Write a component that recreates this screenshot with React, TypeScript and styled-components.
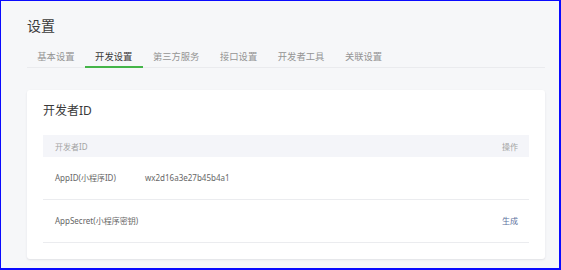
import React from "react";
import styled, { createGlobalStyle } from "styled-components";

const Global = createGlobalStyle`
  html, body { margin: 0; padding: 0; background: #f6f7f9; }
  * { box-sizing: border-box; }
  body { font-family: "Noto Sans", "Noto Sans CJK SC", sans-serif; }
`;

const Frame = styled.div`
  width: 561px;
  height: 270px;
  border-style: solid;
  border-color: #0a0aff;
  border-width: 1px 2px 2px 1px;
  background: #f6f7f9;
  padding: 14px 14px 0 26px;
  overflow: hidden;
`;

const Title = styled.h1`
  margin: 0;
  font-size: 14px;
  line-height: 20px;
  font-weight: 400;
  color: #3a3a3a;
  font-family: "Noto Sans CJK SC", sans-serif;
`;

const TabBar = styled.div`
  display: flex;
  margin-top: 11px;
  border-bottom: 1px solid #eaebee;
`;

const Tab = styled.div<{ $active?: boolean }>`
  padding: 0 10.3px;
  margin-bottom: -1px;
  font-size: 9.3px;
  line-height: 20px;
  color: ${(p) => (p.$active ? "#3a3a3a" : "#949494")};
  border-bottom: 2px solid ${(p) => (p.$active ? "#44b549" : "transparent")};
  font-family: "Noto Sans CJK SC", sans-serif;
  white-space: nowrap;
`;

const Card = styled.section`
  margin-top: 22px;
  background: #ffffff;
  border-radius: 3px;
  box-shadow: 0 1px 2px rgba(150, 150, 160, 0.22);
  padding: 12px 16px 16px 16px;
`;

const CardTitle = styled.h2`
  margin: 0 0 16px 0;
  font-size: 12px;
  line-height: 17px;
  font-weight: 400;
  color: #3a3a3a;
`;

const Table = styled.div`
  display: flex;
  flex-direction: column;
`;

const HeadRow = styled.div`
  display: flex;
  align-items: center;
  justify-content: space-between;
  height: 22px;
  padding: 0 11px 0 12px;
  background: #f4f5f9;
  font-size: 8px;
  color: #a3a3a3;
`;

const Row = styled.div`
  display: flex;
  align-items: center;
  height: 43px;
  padding: 0 11px 1px 12px;
  border-bottom: 1px solid #ebecef;
  font-size: 8px;
  color: #666;
`;

const Label = styled.div`
  width: 90px;
  flex: none;
`;

const Value = styled.div`
  flex: 1;
`;

const Action = styled.a`
  color: #5b6f9e;
  text-decoration: none;
  cursor: pointer;
`;

const tabs = ["基本设置", "开发设置", "第三方服务", "接口设置", "开发者工具", "关联设置"];

export default function App() {
  return (
    <>
      <Global />
      <Frame>
        <Title>设置</Title>
        <TabBar>
          {tabs.map((t) => (
            <Tab key={t} $active={t === "开发设置"}>
              {t}
            </Tab>
          ))}
        </TabBar>
        <Card>
          <CardTitle>开发者ID</CardTitle>
          <Table>
            <HeadRow>
              <span>开发者ID</span>
              <span>操作</span>
            </HeadRow>
            <Row>
              <Label>AppID(小程序ID)</Label>
              <Value>wx2d16a3e27b45b4a1</Value>
            </Row>
            <Row>
              <Label>AppSecret(小程序密钥)</Label>
              <Value />
              <Action>生成</Action>
            </Row>
          </Table>
        </Card>
      </Frame>
    </>
  );
}
